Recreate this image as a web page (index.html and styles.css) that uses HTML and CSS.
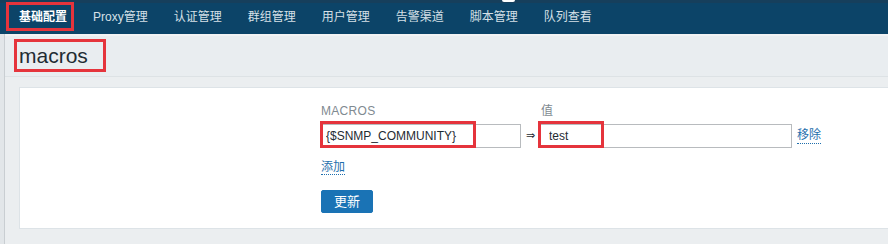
FILE: index.html
```html
<!DOCTYPE html>
<html lang="zh">
<head>
<meta charset="utf-8">
<title>macros</title>
<link rel="stylesheet" href="styles.css">
</head>
<body>
<nav class="topnav">
  <span class="notch"></span>
  <ul class="tabs">
    <li class="tab active"><a class="tab-link">基础配置</a><span class="mark mark-tab"></span></li>
    <li class="tab"><a class="tab-link">Proxy管理</a></li>
    <li class="tab"><a class="tab-link">认证管理</a></li>
    <li class="tab"><a class="tab-link">群组管理</a></li>
    <li class="tab"><a class="tab-link">用户管理</a></li>
    <li class="tab"><a class="tab-link">告警渠道</a></li>
    <li class="tab"><a class="tab-link">脚本管理</a></li>
    <li class="tab"><a class="tab-link">队列查看</a></li>
  </ul>
</nav>
<div class="layout">
  <div class="gutter"></div>
  <main class="content">
    <header class="page-header">
      <h1 class="title">macros</h1>
    </header>
    <section class="panel">
      <div class="macro-grid">
        <div class="col-label">MACROS</div>
        <div></div>
        <div class="col-label">值</div>
        <div></div>
        <div class="field">
          <input class="text-input macro-input" type="text" value="{$SNMP_COMMUNITY}">
          <span class="mark mark-macro"></span>
        </div>
        <div class="arrow">⇒</div>
        <div class="field">
          <input class="text-input value-input" type="text" value="test">
          <span class="mark mark-value"></span>
        </div>
        <a class="link remove-link">移除</a>
      </div>
      <div class="add-row"><a class="link">添加</a></div>
      <div class="btn-row"><button class="btn" type="button">更新</button></div>
    </section>
  </main>
</div>
</body>
</html>
```

FILE: styles.css
```css
html, body {
  margin: 0;
  padding: 0;
  height: 100%;
  overflow: hidden;
  background: #ebeef0;
  font-family: "Liberation Sans", Arial, "Noto Sans CJK SC", sans-serif;
  font-size: 12px;
  color: #1f2c33;
}

.topnav {
  position: relative;
  height: 34px;
  background: #0c4468;
  border-top: 3px solid #163f5c;
  box-sizing: border-box;
}

.notch {
  position: absolute;
  top: -3px;
  left: 502px;
  width: 13px;
  height: 2px;
  background: #ffffff;
  border-radius: 0 0 4px 4px;
}

.tabs {
  list-style: none;
  margin: 0;
  padding: 0 0 0 6px;
  display: flex;
}

.tab {
  position: relative;
}

.tab-link {
  display: block;
  padding: 0 13px;
  line-height: 28px;
  color: #d6e0e7;
  white-space: nowrap;
}

.tab.active .tab-link {
  color: #ffffff;
  font-weight: bold;
}

.mark {
  position: absolute;
  border: 3px solid #e5343c;
  box-sizing: border-box;
  pointer-events: none;
}

.mark-tab {
  left: 0;
  top: -1px;
  width: 68px;
  height: 29px;
}

.layout {
  display: flex;
  height: calc(100% - 34px);
}

.gutter {
  width: 4px;
  flex: 0 0 4px;
  background: #e2e6e9;
  border-right: 1px solid #c9ced2;
}

.content {
  flex: 1;
  min-width: 0;
}

.page-header {
  height: 40px;
  border-top: 2px solid #f2f3f4;
  border-bottom: 1px solid #dde2e5;
  background: #e9edf0;
  padding-left: 9px;
}

.title {
  display: inline-block;
  margin: 3px 0 0 0;
  padding: 0 15px 0 2px;
  border: 3px solid #e5343c;
  font-size: 21px;
  font-weight: normal;
  line-height: 27px;
  color: #1f2c33;
}

.panel {
  margin: 10px -20px 0 14px;
  background: #ffffff;
  border: 1px solid #dde3e7;
  padding: 16px 0 15px 300px;
}

.macro-grid {
  display: grid;
  grid-template-columns: 201px 19px 252px auto;
  row-gap: 6px;
  align-items: center;
}

.col-label {
  padding-left: 1px;
  line-height: 14px;
  color: #7f8a91;
  letter-spacing: 0.3px;
}

.field {
  position: relative;
  height: 24px;
}

.text-input {
  display: block;
  width: 100%;
  height: 24px;
  box-sizing: border-box;
  border: 1px solid #b8bbbe;
  padding: 0 5px;
  margin: 0;
  font-family: "Liberation Sans", Arial, "Noto Sans CJK SC", sans-serif;
  font-size: 12px;
  color: #1f2c33;
  background: #ffffff;
  outline: none;
}

.value-input {
  padding-left: 8px;
}

.mark-macro {
  left: 0;
  top: -3px;
  width: 156px;
  height: 27px;
}

.mark-value {
  left: -2px;
  top: -3px;
  width: 66px;
  height: 27px;
}

.arrow {
  text-align: center;
  font-family: "DejaVu Sans", sans-serif;
  font-size: 11px;
  line-height: 24px;
  color: #1f2c33;
}

.link {
  color: #1f6fad;
  border-bottom: 1px dotted #1f6fad;
  cursor: pointer;
  text-decoration: none;
}

.remove-link {
  justify-self: start;
  margin-left: 5px;
  line-height: 15px;
}

.add-row {
  margin-top: 11px;
  line-height: 16px;
  padding-left: 1px;
}

.btn-row {
  margin-top: 15px;
  padding-left: 1px;
}

.btn {
  height: 23px;
  padding: 0 12px;
  border: 1px solid #1a73b5;
  border-radius: 2px;
  background: #1a73b5;
  color: #ffffff;
  font-family: "Liberation Sans", Arial, "Noto Sans CJK SC", sans-serif;
  font-size: 13px;
  line-height: 21px;
}
```
